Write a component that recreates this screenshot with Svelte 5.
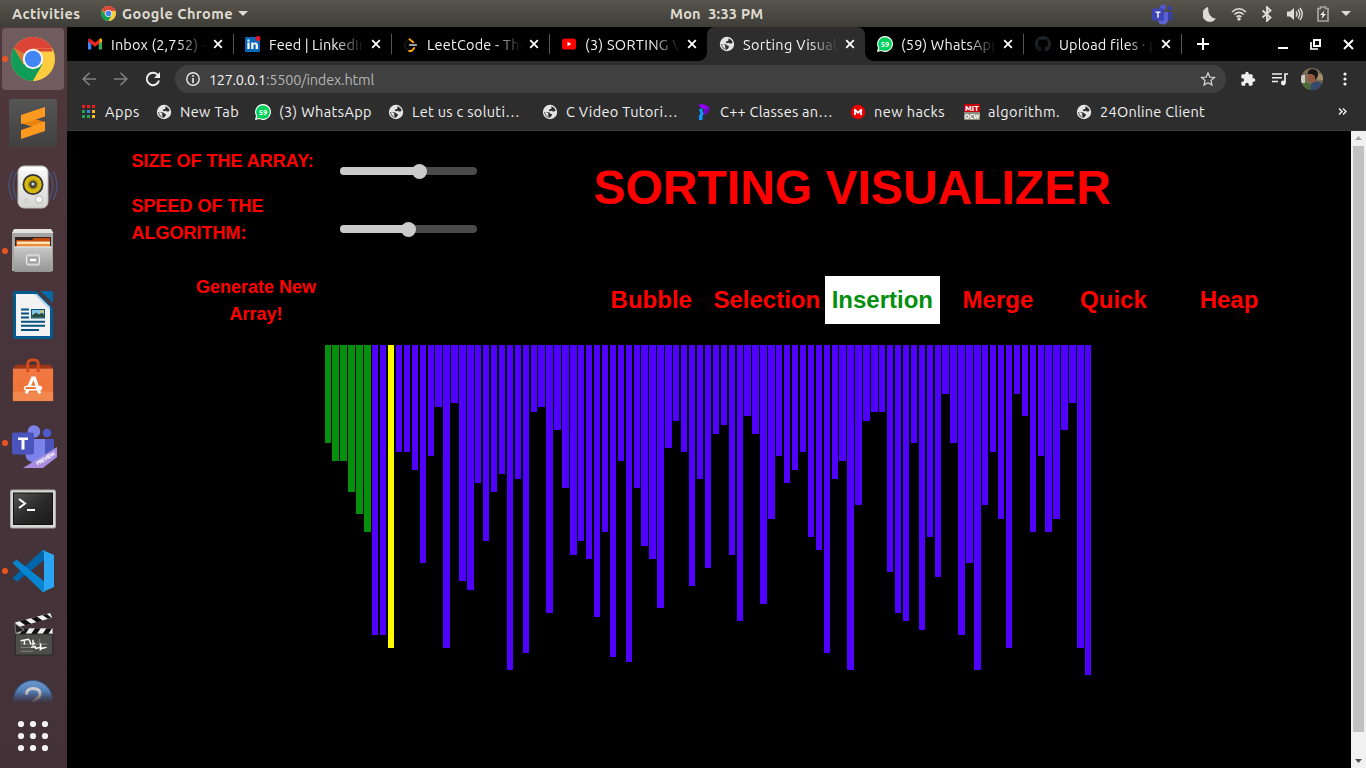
<script>
  // Spreads or tightens letters so a label takes the given width.
  function fit(node, width) {
    if (!width) return;
    const r = document.createRange();
    r.selectNodeContents(node);
    const w = r.getBoundingClientRect().width;
    const n = node.textContent.length;
    node.style.letterSpacing = (width - w) / n + 'px';
  }

  const tabs = [
    { icon: 'gmail', text: 'Inbox (2,752) -', w: 95 },
    { icon: 'linkedin', text: 'Feed | LinkedIn', w: 98 },
    { icon: 'leetcode', text: 'LeetCode - The', w: 101 },
    { icon: 'youtube', text: '(3) SORTING VI', w: 101 },
    { icon: 'globe', text: 'Sorting Visuali', w: 98, active: true },
    { icon: 'whatsapp', text: '(59) WhatsApp', w: 99 },
    { icon: 'github', text: 'Upload files · p', w: 98 }
  ];

  const bookmarks = [
    { icon: 'apps', text: 'Apps', w: 35 },
    { icon: 'globe', text: 'New Tab', w: 59 },
    { icon: 'whatsapp', text: '(3) WhatsApp', w: 93 },
    { icon: 'globe', text: 'Let us c soluti…', w: 108 },
    { icon: 'globe', text: 'C Video Tutori…', w: 112 },
    { icon: 'cpp', text: 'C++ Classes an…', w: 113 },
    { icon: 'mega', text: 'new hacks', w: 71 },
    { icon: 'mit', text: 'algorithm.', w: 72 },
    { icon: 'globe', text: '24Online Client', w: 105 }
  ];

  const algorithms = ['Bubble', 'Selection', 'Insertion', 'Merge', 'Quick', 'Heap'];
  const current = 'Insertion';

  const values = [
    98, 116, 116, 147, 169, 187, 290, 290, 303, 107, 107, 125, 218, 111, 62, 303, 58, 236, 245, 138,
    196, 147, 129, 325, 134, 308, 67, 62, 268, 85, 143, 210, 196, 214, 272, 187, 312, 116, 317, 143,
    201, 214, 263, 103, 76, 107, 241, 134, 223, 89, 80, 210, 276, 71, 89, 259, 174, 111, 138, 125,
    107, 192, 205, 308, 134, 116, 325, 160, 76, 67, 67, 227, 268, 276, 98, 285, 192, 232, 49, 98,
    290, 218, 325, 160, 107, 174, 303, 49, 71, 187, 111, 187, 174, 85, 58, 303, 330
  ];
  const pitch = 7.922;
  const origin = 324.56;
  const bars = values.map((h, i) => {
    const x = Math.round(origin + pitch * i);
    const end = Math.round(origin + pitch * i + 6.37);
    const next = Math.round(origin + pitch * (i + 1));
    return { h, w: end - x, gap: next - end, state: i < 6 ? 'sorted' : i === 8 ? 'active' : 'idle' };
  });

  const dock = ['chrome', 'sublime', 'speaker', 'files', 'writer', 'software', 'teams', 'terminal', 'vscode', 'clapper', 'help'];
  const running = ['chrome', 'files', 'teams', 'vscode'];
</script>

{#snippet chromeLogo(size)}
  <svg width={size} height={size} viewBox="0 0 44 44">
    <circle cx="22" cy="22" r="22" fill="#fecd3f" />
    <path d="M22 22 L2.95 11 A22 22 0 0 1 41.05 11 L41.05 11.6 L22 11.6Z" fill="#db4437" />
    <path d="M2.95 11 A22 22 0 0 0 22 44 L31.5 27.5 L22 22 L12.5 27.5Z" fill="#0f9d58" />
    <path d="M31.5 27.5 L22 44 A22 22 0 0 0 41.4 14.5 L22 14.5Z" fill="#fecd3f" />
    <path d="M22 11.6H40.500L41.6 14.500H22z" fill="#db4437" />
    <path d="M2.95 11 L12.5 27.5 L13 17Z" fill="#b5362c" opacity=".55" />
    <circle cx="22" cy="22" r="10.2" fill="#f4f4f4" />
    <circle cx="22" cy="22" r="8.2" fill="#4285f4" />
  </svg>
{/snippet}

{#snippet icon(name)}
  {#if name === 'globe'}
    <svg width="16" height="16" viewBox="0 0 16 16"><circle cx="8" cy="8" r="7.200" fill="#e4e4e4" /><path d="M9 2.300Q13 3.300 13.600 6.800 12.600 8 11 7.400L9.500 6.800 8 7.300 6.600 6.300 7.600 5.200 9 5 9.600 3.800z" fill="#2d2d2d" /><path d="M2.200 8H5.200Q8 8.300 8.200 9.500L10 10.200 9.500 12 7.800 13.800Q3 13.500 2.200 8z" fill="#2d2d2d" /><path d="M2.800 8.200H5L6.500 9.600 6 11 6.800 13Q3.600 12 2.800 8.200z" fill="#e4e4e4" /></svg>
  {:else if name === 'gmail'}
    <svg width="16" height="16" viewBox="0 0 16 16"><path d="M1 4.500V13.500H4.300V7z" fill="#4285f4" /><path d="M11.700 7V13.500H15V4.500z" fill="#34a853" /><path d="M11.700 4V8L15 5.500V4C15 2.500 13.600 2.200 12.600 3z" fill="#fbbc04" /><path d="M1 5.500L4.300 8V4L3.400 3C2.400 2.200 1 2.700 1 4z" fill="#c5221f" /><path d="M3.400 3L8 6.600 12.600 3V7.200L8 10.800 3.400 7.200z" fill="#ea2a20" /></svg>
  {:else if name === 'linkedin'}
    <svg width="16" height="16" viewBox="0 0 16 16"><rect x="0" y="1" width="15" height="15" rx="1" fill="#0a66b7" /><path d="M2.400 6.600h2.200V13H2.400zM2.400 3.500h2.200v2H2.400zM6.200 6.600h2.100v.9c1.100-1.700 4.600-1.400 4.600 1.800V13h-2.200V9.700c0-2-2.300-1.700-2.300 0V13H6.200z" fill="#fff" /><circle cx="13" cy="2.500" r="2.500" fill="#e81123" /></svg>
  {:else if name === 'leetcode'}
    <svg width="16" height="16" viewBox="0 0 16 16" fill="none" stroke-linecap="round"><path d="M6.500 3.300L10.300 6.300M6.200 14.800C8 15.800 9.500 14.800 11.200 12" stroke="#ffa116" stroke-width="2" /><path d="M6.500 9h6.800" stroke="#d6d6d6" stroke-width="1.500" /><path d="M5 4.500L2 8q-1 1.500 0 3l2.500 3" stroke="#1b1b1b" stroke-width="1.500" /></svg>
  {:else if name === 'youtube'}
    <svg width="16" height="16" viewBox="0 0 16 16"><rect x="1" y="2.500" width="14" height="11" rx="2.600" fill="#f00" /><path d="M6.500 5.800v4.400L10.300 8z" fill="#fff" /></svg>
  {:else if name === 'whatsapp'}
    <svg width="16" height="16" viewBox="0 0 16 16"><path d="M8 0a8 8 0 1 1-3.700 15.100L0 16l1-4.200A8 8 0 0 1 8 0z" fill="#fff" /><path d="M8 1.200a6.800 6.800 0 1 1-3.300 12.700L1.700 14.500 2.300 11.700A6.800 6.800 0 0 1 8 1.200z" fill="#00d15a" /><text x="8" y="10.800" text-anchor="middle" font-size="7.500" font-weight="bold" fill="#fff">59</text></svg>
  {:else if name === 'github'}
    <svg width="16" height="16" viewBox="0 0 16 16"><path d="M8 0C3.580 0 0 3.580 0 8c0 3.540 2.290 6.530 5.470 7.590.4.070.550-.17.550-.38 0-.19-.01-.82-.01-1.490-2.010.37-2.530-.49-2.690-.94-.09-.23-.48-.94-.82-1.130-.28-.15-.68-.52-.01-.53.630-.01 1.080.580 1.230.820.720 1.210 1.870.870 2.330.660.070-.52.280-.87.510-1.070-1.780-.2-3.640-.89-3.640-3.950 0-.87.310-1.590.820-2.150-.08-.2-.36-1.020.080-2.120 0 0 .670-.21 2.200.820.640-.18 1.320-.27 2-.27s1.360.090 2 .270c1.530-1.040 2.200-.82 2.200-.82.440 1.100.160 1.920.080 2.120.510.560.820 1.270.820 2.150 0 3.070-1.870 3.750-3.650 3.950.290.250.540.730.540 1.480 0 1.070-.01 1.930-.01 2.200 0 .210.150.460.550.380A8.010 8.010 0 0 0 16 8c0-4.420-3.580-8-8-8z" fill="#1e232a" /></svg>
  {:else if name === 'apps'}
    <svg width="16" height="16" viewBox="0 0 16 16" shape-rendering="crispEdges">
      <path d="M1 1h3v3H1zM6 1h3v3H6zM11 1h3v3h-3z" fill="#f01c1c" />
      <path d="M1 6h3v3H1z" fill="#1fa657" /><path d="M6 6h3v3H6z" fill="#3f83f1" /><path d="M11 6h3v3h-3z" fill="#f7b914" />
      <path d="M1 11h3v3H1zM6 11h3v3H6z" fill="#1fa657" /><path d="M11 11h3v3h-3z" fill="#f7b914" />
    </svg>
  {:else if name === 'cpp'}
    <svg width="16" height="16" viewBox="0 0 16 16"><path d="M3.500 0L9 .5 13.500 4 12 8.500 7.500 11V7.500L9.500 6 3 2.500z" fill="#9300f5" /><path d="M9.500 6L13.500 4 12 8.500 8 10.500z" fill="#6508c9" /><path d="M3 5.500l3.500-1.500v3.500l1.200 2.500-1.200 1.500V16H3v-4.500l1.500-2z" fill="#0a9cff" /></svg>
  {:else if name === 'mega'}
    <svg width="16" height="16" viewBox="0 0 16 16"><circle cx="8" cy="8" r="7.200" fill="#f00000" /><path d="M4 11V5h1.500L8 7.600 10.500 5H12v6h-1.800V8L8 10 5.800 8v3z" fill="#fff" /></svg>
  {:else if name === 'mit'}
    <svg width="16" height="16" viewBox="0 0 16 16"><rect width="16" height="8" fill="#c4000d" /><rect y="8" width="16" height="8" fill="#8d8b7b" /><text x="8" y="7" text-anchor="middle" textLength="14" lengthAdjust="spacingAndGlyphs" font-size="8" font-weight="900" fill="#fff">MIT</text><text x="8" y="14.800" text-anchor="middle" textLength="15" lengthAdjust="spacingAndGlyphs" font-size="8" font-weight="900" fill="#fff">OCW</text></svg>
  {/if}
{/snippet}

{#snippet dockIcon(name)}
  {#if name === 'chrome'}
    {@render chromeLogo(44)}
  {:else if name === 'sublime'}
    <svg width="48" height="48" viewBox="0 0 48 48"><defs><linearGradient id="sb" x2="0" y2="1"><stop stop-color="#555" /><stop offset="1" stop-color="#414141" /></linearGradient></defs><rect width="48" height="48" rx="2.500" fill="url(#sb)" /><path d="M12 24L36 32V23L12 16z" fill="#e8860f" /><path d="M12 16L36 8V17.500L24 21.500 12 25z" fill="#ff9a1f" /><path d="M12 31L24 27 36 22.500V32L12 40z" fill="#ff9a1f" /></svg>
  {:else if name === 'speaker'}
    <svg width="50" height="48" viewBox="0 0 50 48" fill="none"><path d="M5 8Q-3 22 5 37M8.500 9Q2 22 8.500 36M45 8Q53 22 45 37M41.500 9Q48 22 41.500 36" stroke="#45618f" stroke-width="1.500" opacity=".7" /><defs><linearGradient id="sp" x2="0" y2="1"><stop stop-color="#fafafa" /><stop offset="1" stop-color="#d4d4d2" /></linearGradient></defs><rect x="10" y="3" width="30" height="42" rx="6" fill="url(#sp)" stroke="#bcbcb9" /><rect x="13" y="4" width="24" height="4" rx="2" fill="#fff" /><circle cx="25" cy="21.500" r="10.500" fill="#333" /><circle cx="25" cy="21.500" r="8.700" fill="#d7b811" /><circle cx="25" cy="21.500" r="5" fill="#a28a08" /><circle cx="25" cy="21.500" r="3.500" fill="#3e4144" /><circle cx="25" cy="21" r="1.600" fill="#d7d9dd" /><circle cx="31" cy="36.500" r="3.700" fill="#f4f4f4" stroke="#b5b5b5" /><circle cx="18" cy="38" r="2" stroke="#c7c7c7" /></svg>
  {:else if name === 'files'}
    <svg width="44" height="46" viewBox="0 0 44 46"><defs><linearGradient id="fg" x2="0" y2="1"><stop stop-color="#c9c9c9" /><stop offset="1" stop-color="#959595" /></linearGradient></defs><path d="M4 1H40L42 5V43H1V5z" fill="#a5a5a5" /><path d="M3 1H40L42.500 5H1z" fill="#e2e2e2" /><rect x="4" y="9" width="36" height="11" fill="#33241f" /><path d="M5 12h16l2-2h16v8H5z" fill="#c34b10" /><rect x="6" y="13.500" width="33" height="2.500" fill="#ffe3b7" /><rect x="6" y="16" width="33" height="3" fill="#ef8b35" /><rect x="3" y="18.500" width="38" height="25.500" rx="1" fill="url(#fg)" /><path d="M3.500 19h37" stroke="#eee" /><rect x="15.500" y="27" width="13" height="10" rx="1.500" fill="#bbb" stroke="#eee" /><rect x="18" y="30" width="8" height="4" rx=".5" fill="#fff" stroke="#777" /></svg>
  {:else if name === 'writer'}
    <svg width="42" height="48" viewBox="0 0 42 48"><path d="M3 0H24L41 17V46q0 2-2 2H3q-2 0-2-2V2Q1 0 3 0z" fill="#045b8e" /><path d="M4 3H22.500L38 18.500V45H4z" fill="#f3f3f3" /><path d="M22.500 3L38 18.500V16L25 3z" fill="#c6dfed" /><path d="M28 0H39Q41 0 41 2V12z" fill="#0369a3" /><path d="M9 18.500h8M9 22.500h8M9 26.500h8M9 30.700h24M9 34.800h24M9 39h18" stroke="#07537d" stroke-width="1.900" /><rect x="19.500" y="18.500" width="13" height="8.500" fill="#83c5ea" stroke="#07537d" /><path d="M20 26.500v-2l4-3 3 2 3-2 2.500 3v2z" fill="#284f3b" /><circle cx="30" cy="20.500" r="1.500" fill="#e9c936" /></svg>
  {:else if name === 'software'}
    <svg width="44" height="44" viewBox="0 0 44 46"><defs><linearGradient id="sw" x2="0" y2="1"><stop stop-color="#f17843" /><stop offset="1" stop-color="#ee7333" /></linearGradient></defs><path d="M4 7H40L43 11H1z" fill="#9d3616" /><rect x="1" y="11" width="42" height="34" fill="url(#sw)" /><rect x="1" y="35" width="42" height="10" fill="#f3884f" /><path d="M16.500 15V6q0-4 5.500-4t5.500 4v9" fill="none" stroke="#d84b1b" stroke-width="3" /><path d="M15 37L21.500 21h2L29 37" fill="none" stroke="#fff" stroke-width="3.300" /><rect x="12.500" y="29" width="19" height="5" rx="2.500" fill="#fff" /><rect x="14" y="30.500" width="11" height="2" rx="1" fill="#e9641f" /></svg>
  {:else if name === 'teams'}
    <svg width="48" height="48" viewBox="0 0 48 48"><circle cx="38" cy="13" r="4.300" fill="#5059c9" /><path d="M33 19H45V30L33 38Z" fill="#4b53bc" /><circle cx="25" cy="11.500" r="6.200" fill="#7b83eb" /><path d="M15 19H36V34A10.500 10 0 0 1 17 38Z" fill="#7b83eb" /><rect x="3" y="12.500" width="22" height="22" rx="2" fill="#4b53bc" /><path d="M9 17.500h10V20h-3.500V29.500h-3V20H9z" fill="#fff" /><path d="M14 48L48 27V37L34 48z" fill="#a88de0" /><text x="0" y="0" transform="translate(28.500 45.500) rotate(-31)" font-size="5.500" font-weight="bold" textLength="21" fill="#fff">PREVIEW</text></svg>
  {:else if name === 'terminal'}
    <svg width="48" height="42" viewBox="0 0 48 42"><defs><linearGradient id="tm" x2="1" y2="1"><stop stop-color="#555" /><stop offset=".5" stop-color="#2b2b2b" /><stop offset="1" stop-color="#191919" /></linearGradient></defs><rect x="1.500" y="2" width="45" height="38" rx="1.500" fill="#d7d7d5" stroke="#aaa" /><rect x="4.500" y="5" width="39" height="31.500" fill="url(#tm)" stroke="#111" /><path d="M10 11l6 4.500-6 4.500" fill="none" stroke="#fff" stroke-width="2" /><path d="M18 22h8" stroke="#fff" stroke-width="2" /></svg>
  {:else if name === 'vscode'}
    <svg width="44" height="44" viewBox="0 0 44 44"><path d="M1.500 29L5.500 33 34 10.500V1L31.500 1z" fill="#0065a9" /><path d="M1.500 14L5.500 10.500 34 33V43H31.500z" fill="#0785d0" /><path d="M31.500 1L43 6V38L31.500 43 33 41V3z" fill="#2ba6f3" /></svg>
  {:else if name === 'clapper'}
    <svg width="42" height="48" viewBox="0 0 44 48"><path d="M3 11L40 1L42 6L6 16z" fill="#eee" /><path d="M8 9.500l6 4.300 6-1.700-6-4.300zM20 6.400l6 4.200 6-1.700-6-4.200zM32 3.100l5.500 4 4-1-5-4z" fill="#111" /><rect x="4" y="17" width="38.500" height="6" fill="#eee" /><path d="M12 17h6l-4 6H8zM24 17h6l-4 6h-6zM36 17h6l-4 6h-6z" fill="#111" /><path d="M3 12L13 19 4 22z" fill="#222" stroke="#777" /><rect x="3.500" y="23" width="39" height="22" rx="1" fill="#4d4d4b" stroke="#292929" /><path d="M9 33.500h28M9 37h28M9 41h13M29 28v13" stroke="#858585" /><path d="M9 30l9-1.500M13 29v5M18 29l2 5M22 29v5l2-2M20 37l4-1 1 2 5-1 1 1 5-1M30 33v7" fill="none" stroke="#fff" stroke-width="1.500" /></svg>
  {:else if name === 'help'}
    <svg width="42" height="42" viewBox="0 0 42 42"><defs><linearGradient id="hp" x2="0" y2="1"><stop stop-color="#6b99cc" /><stop offset=".6" stop-color="#355f9d" /></linearGradient></defs><circle cx="21" cy="21" r="19.500" fill="url(#hp)" stroke="#355783" /><path d="M14.500 16q0-6.500 6.500-6.500 7 0 7 5.500 0 3-3.500 5t-3.500 5" fill="none" stroke="#ccc8c6" stroke-width="3" /></svg>
  {/if}
{/snippet}

<div class="desktop">
  <header class="panel">
    <span class="activities" use:fit={68.5}>Activities</span>
    <span class="app-logo">{@render chromeLogo(15)}</span>
    <span class="app-name" use:fit={111}>Google Chrome</span>
    <svg class="caret" width="10" height="5" viewBox="0 0 10 5"><path d="M0 0h10L5 5z" fill="#dfdbd2" /></svg>
    <span class="clock" use:fit={93.5}>Mon&nbsp; 3:33 PM</span>
    <div class="tray">
      <svg width="23" height="22" viewBox="0 0 23 22"><circle cx="12" cy="4.500" r="3" fill="#5059c9" /><circle cx="19" cy="5" r="2.300" fill="#3940a0" /><path d="M15 9h6.500v7q-2 3-5 1z" fill="#3a409f" /><path d="M7 9h10v8a5 4.500 0 0 1-10 0z" fill="#5a62d2" /><rect x="1" y="5.500" width="12" height="12" rx="1" fill="#3d45b5" /><path d="M4.500 8.500h5v1.300H7.700v5H6.300v-5H4.500z" fill="#fff" /></svg>
      <svg class="moon" width="14" height="16" viewBox="0 0 14 16"><path d="M5 1A7.500 7.500 0 1 0 13 12.500Q5 12 5 1z" fill="#dfdbd2" /></svg>
      <svg class="wifi" width="16" height="14" viewBox="0 0 16 14" fill="none" stroke="#dfdbd2" stroke-width="1.500"><path d="M1 5q7-6.500 14 0M3.300 7.500q4.700-4.300 9.400 0M5.500 10q2.500-2.200 5 0" /><circle cx="8" cy="12" r="1" fill="#dfdbd2" /></svg>
      <svg class="bt" width="12" height="16" viewBox="0 0 12 16" fill="none" stroke="#dfdbd2" stroke-width="1.900"><path d="M1.500 4.500l8 7L6 14.800V1.200l3.500 3.300-8 7" /></svg>
      <svg class="vol" width="17" height="16" viewBox="0 0 17 16"><path d="M1 5.500h3L8 2v12l-4-3.500H1z" fill="#dfdbd2" /><path d="M10 5.500q2 2.500 0 5M12 3.500q3.500 4.500 0 9M14 2q4.500 6 0 12" fill="none" stroke="#dfdbd2" stroke-width="1.400" /></svg>
      <svg class="bat" width="12" height="16" viewBox="0 0 12 16"><path d="M1 2.500h2.500V1h5v1.500H11V15H1z" fill="none" stroke="#aaa79f" stroke-width="1.700" /><path d="M7.500 4.500L3 9h2.500l-1 4L9 8H6.500z" fill="#eee" /></svg>
      <svg class="down" width="10" height="5" viewBox="0 0 10 5"><path d="M0 0h10L5 5z" fill="#dfdbd2" /></svg>
    </div>
  </header>

  <div class="workspace">
    <aside class="dock">
      {#each dock as name}
        <div class="slot {name}">
          {#if running.includes(name)}<i class="dot"></i>{/if}
          {@render dockIcon(name)}
        </div>
      {/each}
      <div class="all-apps">
        <svg width="32" height="32" viewBox="0 0 32 32" fill="#f3f1f1">
          {#each [4, 16, 28] as cy}{#each [4, 16, 28] as cx}<circle {cx} {cy} r="3.100" />{/each}{/each}
        </svg>
      </div>
    </aside>

    <div class="browser">
      <div class="tabstrip">
        {#each tabs as t, i}
          <div class="tab" class:active={t.active} class:line={!t.active && i !== 3}>
            <span class="fav">{@render icon(t.icon)}</span>
            <span class="title"><span use:fit={t.w}>{t.text}</span></span>
            <svg class="x" width="10" height="10" viewBox="0 0 10 10"><path d="M1.200 1.200l7.600 7.600M8.800 1.200l-7.600 7.600" stroke="#fff" stroke-width="1.800" /></svg>
          </div>
        {/each}
        <svg class="plus" width="12" height="12" viewBox="0 0 12 12"><path d="M6 0v12M0 6h12" stroke="#fff" stroke-width="2" /></svg>
        <div class="controls">
          <svg width="10" height="10" viewBox="0 0 10 10"><path d="M0 9h10" stroke="#fff" stroke-width="2" /></svg>
          <svg width="11" height="11" viewBox="0 0 11 11" fill="none" stroke="#fff"><path d="M4 1h6v6H4z" stroke-width="2" /><path d="M1 3v7h7" stroke-width="1.700" /></svg>
          <svg width="11" height="11" viewBox="0 0 11 11"><path d="M1 1l9 9M10 1l-9 9" stroke="#fff" stroke-width="1.900" /></svg>
        </div>
      </div>

      <div class="toolbar">
        <svg width="14" height="14" viewBox="0 0 14 14" fill="none" stroke="#818181" stroke-width="1.600"><path d="M14 7H1M7.500.8L1.200 7l6.300 6.200" /></svg>
        <svg class="fwd" width="14" height="14" viewBox="0 0 14 14" fill="none" stroke="#818181" stroke-width="1.600"><path d="M0 7h13M6.500.8L12.800 7l-6.300 6.200" /></svg>
        <svg class="reload" width="16" height="16" viewBox="0 0 16 16"><path d="M13 4.300A6.200 6.200 0 1 0 14 9.500" fill="none" stroke="#f1f1f1" stroke-width="1.900" /><path d="M15 1v6H9z" fill="#f1f1f1" /></svg>
        <div class="omnibox">
          <svg width="14" height="14" viewBox="0 0 14 14"><circle cx="7" cy="7" r="6.200" fill="none" stroke="#e8e8e8" stroke-width="1.400" /><path d="M7 6v5M7 3v1.700" stroke="#e8e8e8" stroke-width="1.600" /></svg>
          <span class="host" use:fit={57}>127.0.0.1</span><span class="path" use:fit={108}>:5500/index.html</span>
          <svg class="star" width="16" height="16" viewBox="0 0 16 16"><path d="M8 1.800l1.800 4.300 4.700.4-3.600 3 1.100 4.600L8 11.700l-4 2.400 1.100-4.600-3.600-3 4.700-.4z" fill="none" stroke="#d6d6d6" stroke-width="1.200" /></svg>
        </div>
        <svg class="ext" width="16" height="16" viewBox="0 0 24 24"><path d="M20.500 11H19V7c0-1.100-.9-2-2-2h-4V3.500a2.500 2.500 0 0 0-5 0V5H4c-1.100 0-2 .9-2 2v3.800h1.500a2.700 2.700 0 0 1 0 5.400H2V20c0 1.100.9 2 2 2h3.800v-1.500a2.700 2.700 0 0 1 5.400 0V22H17c1.100 0 2-.9 2-2v-4h1.500a2.500 2.500 0 0 0 0-5z" fill="#eee" /></svg>
        <svg class="media" width="16" height="14" viewBox="0 0 16 14"><path d="M0 2h10M0 5.700h10M0 9.500h6" stroke="#eee" stroke-width="1.500" /><path d="M13 11V2h3" fill="none" stroke="#eee" stroke-width="1.700" /><circle cx="11.300" cy="11" r="2.400" fill="#eee" /></svg>
        <svg class="avatar" width="22" height="22" viewBox="0 0 22 22"><defs><clipPath id="av"><circle cx="11" cy="11" r="11" /></clipPath></defs><g clip-path="url(#av)"><rect width="22" height="22" fill="#7c6c54" /><path d="M0 7h4v8H0z" fill="#cfccc4" /><path d="M15 6h7v6h-5z" fill="#a08c68" /><path d="M1 16q4-3 9 0v6H1z" fill="#4d6c35" /><path d="M9 22q0-8 5-9l6 1 3 8z" fill="#37486d" /><path d="M8 6h6v8l-3 1-3-2-.8-3z" fill="#96583c" /><path d="M6.500 6Q7 1 12 1q5.500.5 5 7L14 12V8L11 6z" fill="#17151a" /></g></svg>
        <svg class="menu" width="4" height="14" viewBox="0 0 4 14" fill="#f1f1f1"><circle cx="2" cy="2" r="1.600" /><circle cx="2" cy="7" r="1.600" /><circle cx="2" cy="12" r="1.600" /></svg>
      </div>

      <div class="bookmarks">
        {#each bookmarks as b}
          <div class="bookmark">{@render icon(b.icon)}<span use:fit={b.w}>{b.text}</span></div>
        {/each}
        <svg class="more" width="9" height="7" viewBox="0 0 9 7" fill="none" stroke="#eee" stroke-width="1.500"><path d="M1 .5l3 3-3 3M5 .5l3 3-3 3" /></svg>
      </div>

      <div class="view">
        <main>
          <section class="top">
            <div class="labels"><p>SIZE OF THE ARRAY:</p><p>SPEED OF THE ALGORITHM:</p></div>
            <div class="sliders">
              <div class="range"><i style="width: 79.5px"></i><b></b></div>
              <div class="range"><i style="width: 68.5px"></i><b></b></div>
            </div>
            <h1>SORTING VISUALIZER</h1>
          </section>
          <section class="actions">
            <div class="generate">Generate New Array!</div>
            <nav>
              {#each algorithms as a}<div class="algo" class:chosen={a === current}>{a}</div>{/each}
            </nav>
          </section>
          <section class="chart">
            {#each bars as b}<div class="bar {b.state}" style="width: {b.w}px; height: {b.h}px; margin-right: {b.gap}px"></div>{/each}
          </section>
        </main>
        <div class="scrollbar">
          <svg width="15" height="15" viewBox="0 0 15 15"><path d="M4 9h7L7.500 5z" fill="#a3a3a3" /></svg>
          <div class="thumb"></div>
          <svg width="15" height="15" viewBox="0 0 15 15"><path d="M4 6h7L7.500 10z" fill="#505050" /></svg>
        </div>
      </div>
    </div>
  </div>
</div>

<style>
  :global(body) { margin: 0; background: #000; }
  svg { display: block; flex: none; }
  .desktop { width: 1366px; height: 768px; overflow: hidden; display: flex; flex-direction: column; background: #000; font-family: Ubuntu, "Noto Sans", sans-serif; white-space: nowrap; }

  .panel { height: 27px; flex: none; display: flex; align-items: center; background: linear-gradient(#58554c, #3e3d38); color: #dfdbd2; font-size: 14.500px; font-weight: 600; }
  .activities { width: 89px; padding-left: 12px; box-sizing: border-box; }
  .app-logo { margin-left: 12px; width: 21px; }
  .app-name { width: 116px; }
  .clock { margin-left: 422px; width: 94px; }
  .tray { flex: 1; display: flex; align-items: center; padding-left: 387px; }
  .moon { margin-left: 29px; }
  .wifi { margin-left: 14px; }
  .bt { margin-left: 14px; }
  .vol { margin-left: 13px; }
  .bat { margin-left: 14px; }
  .down { margin-left: 12px; }

  .workspace { flex: 1; min-height: 0; display: flex; }
  .dock { width: 67px; flex: none; background: linear-gradient(#50373b, #46343a 50%, #423136); display: flex; flex-direction: column; }
  .slot { height: 64px; flex: none; display: flex; align-items: center; justify-content: center; position: relative; width: 66px; box-sizing: border-box; }
  .slot.chrome { width: 62px; height: 62px; margin: 1px 0 1px 2px; border-radius: 4px; background: #705b5f; }
  .slot.software, .slot.teams { padding-top: 2px; }
  .slot.terminal { padding-top: 4px; }
  .slot.help { height: 37px; align-items: flex-start; overflow: hidden; padding-top: 12px; -webkit-mask-image: linear-gradient(#000 65%, transparent 98%); mask-image: linear-gradient(#000 65%, transparent 98%); }
  .dot { position: absolute; left: 2px; top: 29px; width: 6px; height: 6px; border-radius: 50%; background: #e95420; }
  .chrome .dot { left: 0; top: 28px; }
  .all-apps { padding: 16px 0 0 17px; }

  .browser { flex: 1; min-width: 0; display: flex; flex-direction: column; background: #2d2d2d; }
  .tabstrip { height: 34px; flex: none; background: #000; display: flex; align-items: center; padding-left: 8px; color: #f4f4f4; font-size: 14.500px; }
  .tab { width: 158px; height: 34px; flex: none; box-sizing: border-box; display: flex; align-items: center; padding-left: 12px; position: relative; }
  .tab.line::after { content: ""; position: absolute; right: -1px; top: 7px; width: 1px; height: 20px; background: #555; }
  .tab.active { background: #2d2d2d; border-radius: 8px 8px 0 0; }
  .tab.active::before, .tab.active::after { content: ""; position: absolute; bottom: 0; width: 8px; height: 8px; }
  .tab.active::before { left: -8px; background: radial-gradient(circle at 0 0, transparent 7.500px, #2d2d2d 8px); }
  .tab.active::after { right: -8px; background: radial-gradient(circle at 100% 0, transparent 7.500px, #2d2d2d 8px); }
  .title { width: 95px; margin-left: 8px; overflow: hidden; -webkit-mask-image: linear-gradient(90deg, #000 70%, transparent 100%); mask-image: linear-gradient(90deg, #000 70%, transparent 100%); }
  .x { margin-left: 7px; }
  .plus { margin-left: 16px; }
  .controls { display: flex; gap: 22px; margin-left: 69px; align-items: center; }

  .toolbar { height: 36px; flex: none; display: flex; align-items: center; padding-left: 15px; }
  .fwd { margin-left: 18px; }
  .reload { margin-left: 17px; }
  .omnibox { width: 1051px; height: 28px; margin-left: 14px; border-radius: 14px; background: #404040; display: flex; align-items: center; box-sizing: border-box; padding: 0 10px 0 11px; font-size: 14.500px; color: #b3b3b3; }
  .host { margin-left: 9px; color: #f4f4f4; }
  .star { margin-left: auto; }
  .ext { margin-left: 14px; }
  .media { margin-left: 16px; }
  .avatar { margin-left: 13px; }
  .menu { margin-left: 20px; }

  .bookmarks { height: 29px; flex: none; border-bottom: 1px solid #3b3b3b; display: grid; grid-template-columns: 75px 99px 133px 154px 154px 154px 114px 112px 262px auto; align-items: center; padding: 0 0 4px 14px; color: #f1f1f1; font-size: 14.500px; }
  .bookmark { display: flex; align-items: center; gap: 8px; }

  .view { flex: 1; min-height: 0; display: flex; background: #000; }
  main { flex: 1; font-family: "Liberation Sans", Arial, sans-serif; font-weight: bold; color: #f00; }
  .top { display: flex; height: 145px; }
  .labels { padding: 17px 0 0 64.500px; width: 199.500px; white-space: normal; font-size: 18px; line-height: 27px; }
  .labels p { margin: 0 0 18px; }
  .sliders { width: 137px; margin-left: 9px; padding-top: 36px; }
  .range { display: flex; align-items: center; height: 8px; border-radius: 4px; background: #4a4a4a; margin-bottom: 50px; }
  .range i { height: 8px; border-radius: 4px 0 0 4px; background: #cbcbcb; flex: none; }
  .range b { width: 15px; height: 15px; border-radius: 50%; background: #cbcbcb; margin-left: -7.500px; flex: none; }
  h1 { margin: 29px 0 0 116.500px; font-size: 48px; line-height: 56px; }
  .actions { display: flex; height: 69px; }
  .generate { width: 128px; margin-left: 125px; margin-top: -2px; text-align: center; white-space: normal; font-size: 18px; line-height: 27px; }
  nav { display: flex; margin-left: 273.500px; }
  .algo { width: 115.550px; height: 48px; line-height: 48px; text-align: center; font-size: 24px; }
  .algo.chosen { background: #fff; color: #048f0c; }
  .chart { display: flex; align-items: flex-start; padding-left: 258px; }
  .bar { flex: none; background: #4f00ff; }
  .bar.sorted { background: #048f0c; }
  .bar.active { background: #fffb00; }

  .scrollbar { width: 15px; flex: none; background: #f1f1f1; display: flex; flex-direction: column; align-items: center; }
  .thumb { width: 11px; height: 586px; margin-bottom: auto; background: #c1c1c1; }
</style>
